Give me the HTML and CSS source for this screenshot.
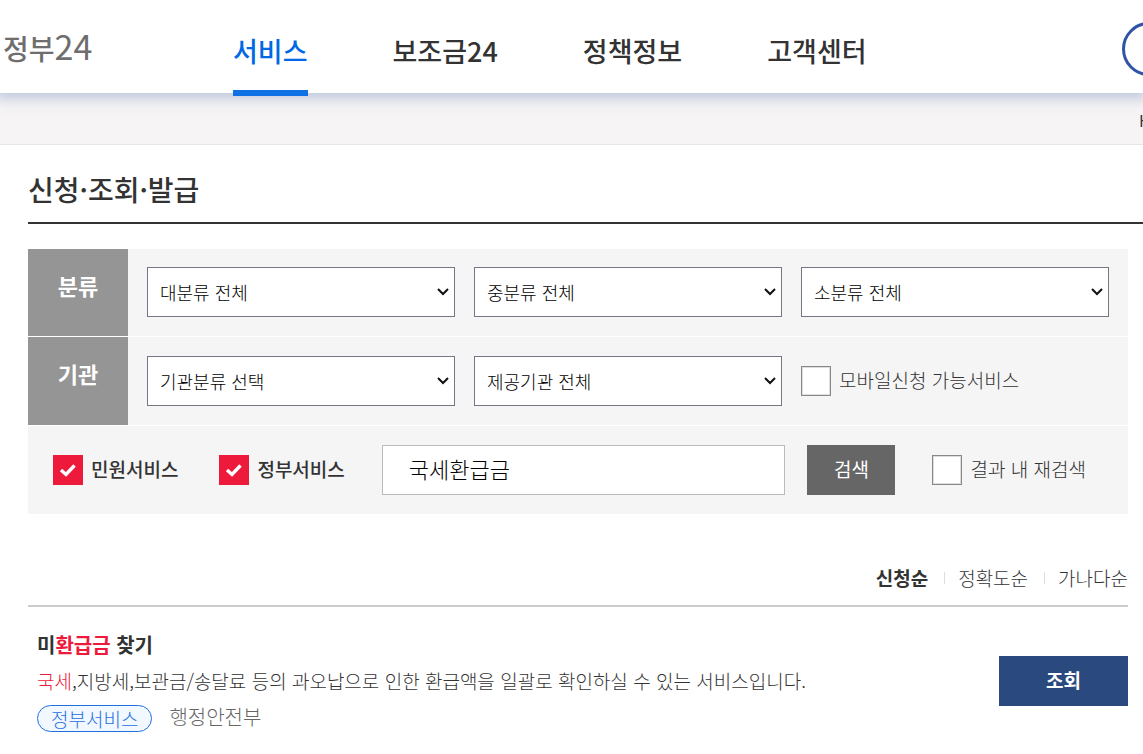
FILE: index.html
```html
<!DOCTYPE html>
<html lang="ko">
<head>
    <meta charset="UTF-8">
    <meta name="viewport" content="width=device-width, initial-scale=1.0">
    <title>신청·조회·발급</title>
    <link rel="stylesheet" href="styles.css">
</head>
<body>
    <header class="header">
        <a href="#" class="logo">정부<span class="logo-num">24</span></a>
        <nav class="gnb">
            <a href="#" class="active">서비스</a>
            <a href="#">보조금24</a>
            <a href="#">정책정보</a>
            <a href="#">고객센터</a>
        </nav>
        <button type="button" class="round-btn" aria-label="검색"></button>
    </header>
    <div class="location">
        <a href="#" class="home">Home</a>
    </div>

    <main>
        <h1 class="page-title">신청·조회·발급</h1>
        <div class="content">
            <form class="search">
                <div class="row">
                    <div class="row-head">분류</div>
                    <div class="row-body">
                        <select class="select" aria-label="대분류"><option>대분류 전체</option></select>
                        <select class="select" aria-label="중분류"><option>중분류 전체</option></select>
                        <select class="select" aria-label="소분류"><option>소분류 전체</option></select>
                    </div>
                </div>
                <div class="row">
                    <div class="row-head">기관</div>
                    <div class="row-body">
                        <select class="select" aria-label="기관분류"><option>기관분류 선택</option></select>
                        <select class="select" aria-label="제공기관"><option>제공기관 전체</option></select>
                        <div class="check">
                            <input type="checkbox" id="mobile">
                            <label for="mobile">모바일신청 가능서비스</label>
                        </div>
                    </div>
                </div>
                <div class="row row-keyword">
                    <div class="check-group">
                        <div class="check">
                            <input type="checkbox" id="civil" checked>
                            <label for="civil">민원서비스</label>
                        </div>
                        <div class="check">
                            <input type="checkbox" id="gov" checked>
                            <label for="gov">정부서비스</label>
                        </div>
                    </div>
                    <div class="keyword">
                        <input type="text" class="keyword-input" value="국세환급금" aria-label="검색어">
                        <button type="button" class="btn-search">검색</button>
                    </div>
                    <div class="check">
                        <input type="checkbox" id="again">
                        <label for="again">결과 내 재검색</label>
                    </div>
                </div>
            </form>

            <ul class="sort">
                <li><a href="#" class="on">신청순</a></li>
                <li><a href="#">정확도순</a></li>
                <li><a href="#">가나다순</a></li>
            </ul>

            <ul class="result">
                <li class="item">
                    <div class="item-text">
                        <a href="#" class="item-title">미<span class="hit">환급금</span> 찾기</a>
                        <p class="item-desc"><span class="hit">국세</span>,지방세,보관금/송달료 등의 과오납으로 인한 환급액을 일괄로 확인하실 수 있는 서비스입니다.</p>
                        <p class="item-info"><span class="tag">정부서비스</span><span class="agency">행정안전부</span></p>
                    </div>
                    <button type="button" class="btn-view">조회</button>
                </li>
            </ul>
        </div>
    </main>
</body>
</html>
```
FILE: styles.css
```css
* {
    box-sizing: border-box;
}

body {
    margin: 0;
    background: #fff;
    color: #333;
    font-family: "Noto Sans CJK KR", sans-serif;
    font-size: 19px;
    font-weight: 300;
    line-height: 28px;
    overflow-x: hidden;
}

a {
    color: inherit;
    text-decoration: none;
}

ul,
p,
h1 {
    margin: 0;
    padding: 0;
    list-style: none;
}

input,
select,
button {
    margin: 0;
    font-family: inherit;
    font-weight: inherit;
}

/* header */
.header {
    position: relative;
    display: flex;
    align-items: center;
    height: 93px;
    padding-left: 3px;
    background: #fff;
    box-shadow: 0 2px 12px 4px rgba(140, 160, 200, 0.5);
}

.logo {
    width: 230px;
    color: #6e6e6e;
    font-size: 28px;
    font-weight: 500;
    line-height: 40px;
}

.logo-num {
    font-size: 34px;
    font-weight: 400;
}

.gnb {
    display: flex;
    align-self: flex-start;
    gap: 85px;
    font-size: 27px;
    font-weight: 500;
}

.gnb a {
    padding-top: 12px;
    border-bottom: 6px solid transparent;
    line-height: 78px;
}

.gnb .active {
    border-color: #1071e5;
    color: #0068e5;
}

.round-btn {
    width: 54px;
    height: 54px;
    margin-top: 4px;
    margin-left: auto;
    margin-right: -33px;
    border: 3px solid #2f54a5;
    border-radius: 50%;
    background: #fff;
}

.location {
    display: flex;
    justify-content: flex-end;
    height: 52px;
    padding-top: 13px;
    border-bottom: 1px solid #e6e6e6;
    background: #f6f4f5;
    font-size: 16px;
    font-weight: 400;
}

.home {
    width: 48px;
    margin-right: -44px;
}

/* title */
.page-title {
    margin-left: 28px;
    padding: 24px 0 13px;
    border-bottom: 2px solid #333;
    font-size: 28px;
    font-weight: 500;
    line-height: 40px;
}

.content {
    padding: 25px 15px 20px 28px;
}

/* search form */
.row {
    display: flex;
    background: #f5f5f5;
}

.row + .row {
    border-top: 1px solid #fff;
}

.row-head {
    display: flex;
    align-items: center;
    justify-content: center;
    width: 100px;
    padding-bottom: 16px;
    background: #959595;
    color: #fff;
    font-size: 22px;
    font-weight: 700;
}

.row-body {
    flex: 1;
    display: grid;
    grid-template-columns: repeat(3, 1fr);
    gap: 19px;
    padding: 19px;
}

.row:first-child .row-body {
    padding-top: 18px;
}

.select {
    appearance: none;
    width: 100%;
    height: 50px;
    padding: 0 24px 0 12px;
    border: 1px solid #767684;
    border-radius: 0;
    background: #fff url("data:image/svg+xml,%3Csvg xmlns='http://www.w3.org/2000/svg' viewBox='0 0 12 8'%3E%3Cpath d='M1 1l5 5 5-5' fill='none' stroke='%23111' stroke-width='2'/%3E%3C/svg%3E") no-repeat right 5px center / 12px 8px;
    color: #000;
    font-size: 18px;
}

.check {
    display: flex;
    align-items: center;
    gap: 8px;
    white-space: nowrap;
}

.check label {
    padding-bottom: 2px;
}

.check input {
    appearance: none;
    width: 30px;
    height: 30px;
    border: 1px solid #888;
    background: #fff;
    box-shadow: inset 0 0 0 1px #ddd;
}

.check input:checked {
    border: 0;
    background: #ed1a3b url("data:image/svg+xml,%3Csvg xmlns='http://www.w3.org/2000/svg' viewBox='0 0 30 30'%3E%3Cpath d='M8 15l5 4.500 8.500-9' fill='none' stroke='%23fff' stroke-width='3.400'/%3E%3C/svg%3E") center / 30px 30px;
    box-shadow: none;
}

.check input:checked + label {
    font-weight: 500;
}

.row-keyword {
    gap: 37px;
    padding: 19px 42px 19px 25px;
}

.check-group {
    display: flex;
    gap: 41px;
}

.keyword {
    flex: 1;
    display: flex;
    gap: 22px;
}

.keyword-input {
    flex: 1;
    min-width: 0;
    height: 50px;
    padding: 0 26px 4px;
    border: 1px solid #bbb;
    background: #fff;
    color: #000;
    font-size: 22px;
}

.btn-search {
    width: 88px;
    padding-bottom: 4px;
    border: 0;
    background: #666;
    color: #fff;
    font-size: 19px;
    font-weight: 400;
}

/* sort */
.sort {
    display: flex;
    justify-content: flex-end;
    align-items: center;
    padding: 50px 0 13px;
    border-bottom: 2px solid #ccc;
}

.sort li {
    display: flex;
    align-items: center;
}

.sort li + li::before {
    content: "";
    width: 1px;
    height: 12px;
    margin: 0 13px 0 16px;
    background: #ddd;
}

.sort .on {
    font-weight: 700;
}

/* result */
.item {
    display: flex;
    align-items: center;
    justify-content: space-between;
    padding: 22px 0 0 9px;
}

.item-title {
    font-size: 20px;
    font-weight: 700;
    line-height: 32px;
}

.hit {
    color: #ed1a3b;
}

.item-desc {
    padding: 6px 0 10px;
}

.item-info {
    display: flex;
    gap: 17px;
    color: #666;
    font-size: 20px;
    line-height: 24px;
}

.tag {
    padding: 0 13px;
    border: 1px solid #1f70df;
    border-radius: 14px;
    background: #f2f8ff;
    color: #1f70df;
    font-size: 19px;
    line-height: 25px;
}

.btn-view {
    width: 129px;
    height: 50px;
    padding-bottom: 4px;
    border: 0;
    background: #2a4a7f;
    color: #fff;
    font-size: 19px;
    font-weight: 700;
}
```
